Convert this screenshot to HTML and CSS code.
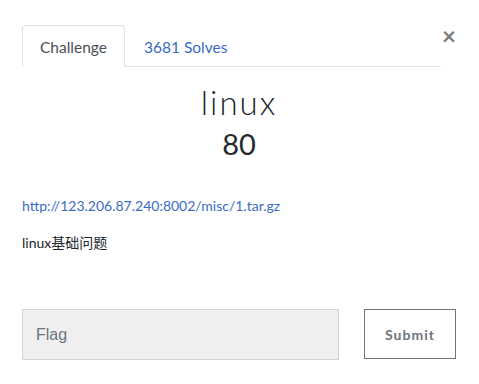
FILE: index.html
```html
<!DOCTYPE html>
<html>
<head>
<meta charset="utf-8">
<link rel="stylesheet" href="styles.css">
</head>
<body>
<div class="modal">
  <button class="close" aria-label="Close">&times;</button>
  <ul class="tabs">
    <li class="tab active">Challenge</li>
    <li class="tab solves"><a href="#">3681 Solves</a></li>
  </ul>
  <h2 class="name">linux</h2>
  <h3 class="value">80</h3>
  <p class="link"><a href="#">http://123.206.87.240:8002/misc/1.tar.gz</a></p>
  <p class="desc">linux基础问题</p>
  <form class="submit-row">
    <input class="flag" type="text" placeholder="Flag">
    <button class="submit" type="button">Submit</button>
  </form>
</div>
</body>
</html>
```

FILE: styles.css
```css
html, body {
  margin: 0;
  padding: 0;
  background: #fff;
}
body {
  font-family: Lato, "Noto Sans CJK SC", sans-serif;
  color: #212529;
  width: 479px;
  height: 384px;
  overflow: hidden;
}
.modal {
  position: relative;
  padding: 25px 23px 0 22px;
}
.close {
  position: absolute;
  top: 24px;
  right: 23px;
  border: 0;
  background: none;
  padding: 0;
  font-family: Lato, sans-serif;
  font-size: 24px;
  font-weight: 700;
  line-height: 24px;
  color: #7a7a7a;
}
.tabs {
  list-style: none;
  margin: 0 15px 0 0;
  padding: 0;
  display: flex;
  border-bottom: 1px solid #dee2e6;
}
.tab {
  padding: 0 17px;
  height: 40px;
  line-height: 42px;
  font-size: 15.5px;
  margin-bottom: -1px;
  border: 1px solid transparent;
  border-radius: 4px 4px 0 0;
}
.tab.solves {
  padding-left: 18px;
}
.tab.active {
  color: #495057;
  border-color: #dee2e6 #dee2e6 #fff;
  background: #fff;
}
.tab a {
  color: #3a6bc4;
  text-decoration: none;
}
.name {
  margin: 16px 0 0;
  text-align: center;
  font-weight: 300;
  font-size: 33px;
  line-height: 38px;
  color: #212529;
  letter-spacing: 2px;
}
.value {
  margin: 6px 0 0;
  text-align: center;
  font-weight: 400;
  font-size: 29px;
  line-height: 34px;
  color: #262a2e;
}
.link {
  margin: 35px 0 0;
  font-size: 14px;
  line-height: 20px;
}
.link a {
  color: #3a6bc4;
  text-decoration: none;
}
.desc {
  margin: 17px 0 0;
  font-size: 14px;
  line-height: 20px;
}
.submit-row {
  display: flex;
  margin-top: 56px;
  gap: 25px;
  align-items: flex-start;
}
.flag {
  box-sizing: border-box;
  flex: 0 0 317px;
  width: 317px;
  height: 51px;
  border: 1px solid #ced4da;
  background: #efefef;
  padding: 0 13px;
  font-family: "Liberation Sans", Arial, sans-serif;
  font-size: 16px;
  margin: 0;
}
.flag::placeholder {
  color: #6c757d;
}
.submit {
  box-sizing: border-box;
  flex: 0 0 92px;
  width: 92px;
  height: 50px;
  border: 1px solid #6c757d;
  background: #fff;
  color: #6c757d;
  font-family: Lato, sans-serif;
  font-weight: 700;
  font-size: 14px;
  letter-spacing: 1px;
  margin: 0;
  padding: 0;
}
```
